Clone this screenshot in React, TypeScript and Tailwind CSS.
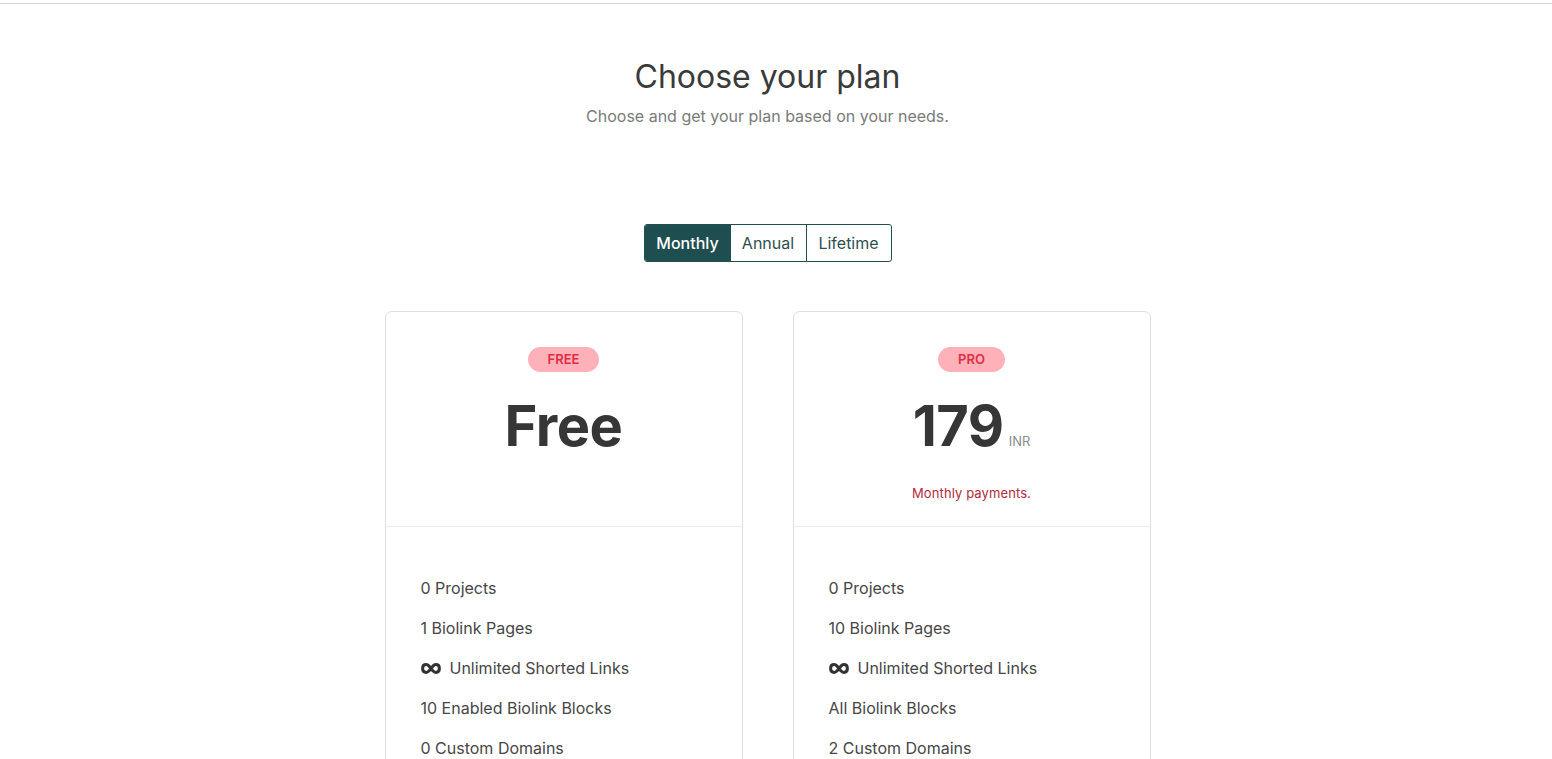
const Infinity = () => (
    <svg width="20" height="11" viewBox="0 0 20 11" className="shrink-0">
        <path d="M5.2 1.6C3 1.6 1.6 3.2 1.6 5.5s1.4 3.9 3.6 3.9c2.3 0 3.4-2 4.8-3.9 1.4-1.9 2.5-3.9 4.8-3.9 2.2 0 3.6 1.6 3.6 3.9s-1.4 3.9-3.6 3.9c-2.3 0-3.4-2-4.8-3.9C8.6 3.6 7.5 1.6 5.2 1.6z" fill="none" stroke="#333" strokeWidth="3" />
    </svg>
)

type Plan = {
    badge: string
    price: string
    currency?: string
    note?: string
    features: string[]
}

const plans: Plan[] = [
    {
        badge: "FREE",
        price: "Free",
        features: ["0 Projects", "1 Biolink Pages", "∞", "10 Enabled Biolink Blocks", "0 Custom Domains"],
    },
    {
        badge: "PRO",
        price: "179",
        currency: "INR",
        note: "Monthly payments.",
        features: ["0 Projects", "10 Biolink Pages", "∞", "All Biolink Blocks", "2 Custom Domains"],
    },
]

const PlanCard = ({ plan }: { plan: Plan }) => {
    return (
        <div className="w-[358px] border border-[#dedede] rounded-[7px] bg-white">
            <div className="h-[215px] flex flex-col items-center pt-[35px] border-b border-[#ececec]">
                <span className="h-[25px] px-5 rounded-full bg-[#ffb1b9] text-[#de2d44] text-[13px] font-semibold flex items-center">{plan.badge}</span>
                <div className="flex items-baseline gap-[5px] mt-[26px]">
                    <span className="text-[56px] leading-none font-bold text-[#363636] tracking-[-0.5px]">{plan.price}</span>
                    {plan.currency && <span className="text-[13px] text-[#8a8a8a]">{plan.currency}</span>}
                </div>
                {plan.note && <p className="text-[13px] leading-5 text-[#b32b3e] mt-[29px] tracking-[0.1px]">{plan.note}</p>}
            </div>
            <ul className="pt-[49px] pl-[35px] flex flex-col gap-4 text-[16px] leading-6 text-[#464646]">
                {plan.features.map((f, i) => (
                    <li key={i} className="flex items-center gap-[9px]">
                        {f === "∞" ? (
                            <>
                                <Infinity />
                                <span>Unlimited Shorted Links</span>
                            </>
                        ) : (
                            <span>{f}</span>
                        )}
                    </li>
                ))}
                <li className="h-[120px]"></li>
            </ul>
        </div>
    )
}

const App = () => {
    return (
        <div className="min-h-screen bg-white font-['Inter',sans-serif] overflow-hidden">
            <div className="h-[3px]"></div>
            <div className="border-t border-[#d6d6d6]"></div>
            <div className="pr-[17px] flex flex-col items-center">
                <h1 className="mt-[54px] text-[32px] leading-[38px] text-[#3a3a3a]">Choose your plan</h1>
                <p className="mt-2 text-[16px] leading-6 text-[#7a7a7a]">Choose and get your plan based on your needs.</p>

                <div className="mt-[96px] flex h-[38px] border border-[#22504f] rounded-[3px] overflow-hidden text-[16px]">
                    <button className="w-[86px] bg-[#1f4e50] text-white font-medium">Monthly</button>
                    <button className="w-[76px] text-[#2e4f4f] border-r border-[#22504f]">Annual</button>
                    <button className="w-[84px] text-[#2e4f4f]">Lifetime</button>
                </div>

                <div className="mt-[49px] flex gap-[50px]">
                    {plans.map((p) => (
                        <PlanCard key={p.badge} plan={p} />
                    ))}
                </div>
            </div>
        </div>
    )
}

export default App
